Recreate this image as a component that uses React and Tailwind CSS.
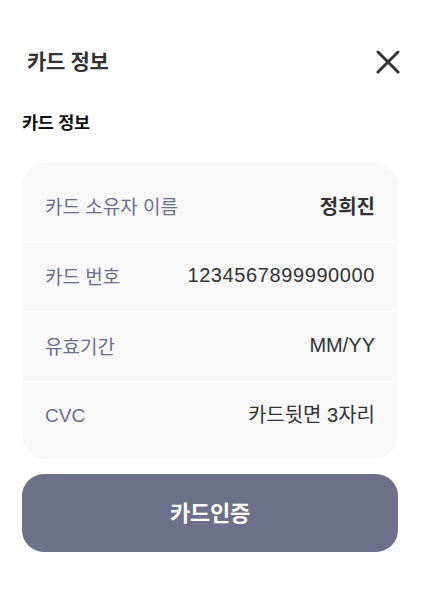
import React from "react";

const rows = [
  { label: "카드 소유자 이름", value: "정희진", bold: true },
  { label: "카드 번호", value: "1234567899990000", wide: true },
  { label: "유효기간", value: "MM/YY" },
  { label: "CVC", value: "카드뒷면 3자리", latinLabel: true },
];

const App = () => {
  return (
    <div
      className="w-[425px] h-[596px] bg-white pl-[22px] pr-[27px] pt-[32px]"
      style={{ fontFamily: '"Liberation Sans", "Noto Sans CJK KR", sans-serif' }}
    >
      <div className="flex items-center justify-between h-[60px]">
        <h1 className="pl-[5px] text-[21px] font-semibold text-[#333333] tracking-[-0.3px]">카드 정보</h1>
        <button className="mr-[-2px] w-[24px] h-[24px] flex items-center justify-center">
          <svg width="24" height="24" viewBox="0 0 24 24" fill="none">
            <path d="M2 2L22 22M22 2L2 22" stroke="#333333" strokeWidth="3" strokeLinecap="round" />
          </svg>
        </button>
      </div>

      <h2 className="mt-[19px] text-[17.5px] font-bold text-[#111111] tracking-[-0.3px] leading-[24px]">카드 정보</h2>

      <div className="mt-[28px] bg-[#f8f8f9] rounded-[24px] py-[8px]">
        {rows.map((row, i) => (
          <div
            key={row.label}
            className={`flex items-center justify-between h-[70px] px-[23px] ${
              i > 0 ? "border-t border-white" : ""
            }`}
          >
            <span className={`text-[19px] text-[#6b6d8a] ${row.latinLabel ? "pb-[1px]" : "pt-[4px]"}`}>
              {row.label}
            </span>
            <span
              className={`text-[20px] text-[#333333] ${row.bold ? "font-bold pt-[1px]" : "pb-[4px]"} ${
                row.wide ? "tracking-[0.6px]" : ""
              }`}
            >
              {row.value}
            </span>
          </div>
        ))}
      </div>

      <button className="mt-[15px] w-full h-[78px] rounded-[22px] bg-[#6e7089] text-white text-[22px] font-bold tracking-[-0.3px]">
        카드인증
      </button>
    </div>
  );
};

export default App;
